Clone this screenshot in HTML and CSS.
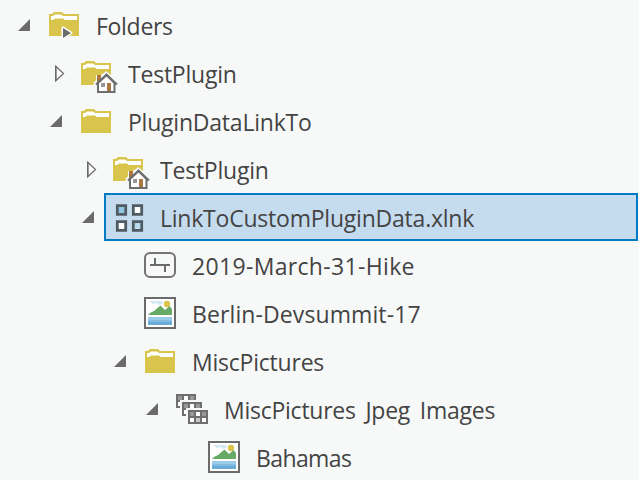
FILE: index.html
```
<!DOCTYPE html>
<html lang="en">
<head>
<meta charset="utf-8">
<title>Catalog</title>
<link rel="stylesheet" href="styles.css">
</head>
<body>
<svg class="defs" aria-hidden="true">
  <defs>
    <symbol id="open" viewBox="0 0 12 12"><path d="M12 0V12H0Z" fill="#6b6b6b"/></symbol>
    <symbol id="closed" viewBox="0 0 10 17"><path d="M.8 1.2V15.8L8.5 8.5Z" fill="#fff" stroke="#737373" stroke-width="1.3"/><path d="M.7 1V16" stroke="#6b6b6b" stroke-width="1.4"/></symbol>
    <symbol id="folder" viewBox="0 0 32 32">
      <path d="M1 6H4L6 4H14L16 6H31V28H1Z" fill="#d9c54c"/>
      <path d="M3 8H5L7 6.500H13L15 8H29V12H17L15 10.500H7L5 12H3Z" fill="#fff"/>
    </symbol>
    <symbol id="house" viewBox="0 0 40 40">
      <path d="M13.500 29V26L16 23V18H21L26.500 14L39 26V29H37V37.500H15V29Z" fill="#f7f9f9"/>
      <path d="M17 18H21V23L17 26Z" fill="#a9783f"/>
      <path d="M18 26L26.500 18L34.500 26V35H18Z" fill="#fff" stroke="#6d6e70" stroke-width="2"/>
      <path d="M16 27.500L26.500 17.800L37 27.500" fill="none" stroke="#6d6e70" stroke-width="2.200"/>
      <path d="M21 26H25V30H21Z" fill="#969696"/><path d="M27 26H31V34H27Z" fill="#a9783f"/>
    </symbol>
    <symbol id="picture" viewBox="0 0 32 32">
      <path d="M1 1H31V31H1Z" fill="#fff" stroke="#6b6b6b" stroke-width="2"/>
      <path d="M5 4H19L18 7L15 8L12 6L9 7Z" fill="#d3e8f5"/>
      <circle cx="23" cy="7" r="3.200" fill="#dac54c"/>
      <path d="M4 18L6 16L10 14L16.500 8.500L21 13L25.500 9L28 12V18Z" fill="#67aa65"/>
      <path d="M4 20H28V28H4Z" fill="#69acd9"/><path d="M4 20H28V23H4Z" fill="#9acbea"/><path d="M4 23H28V25H4Z" fill="#82bce2"/>
    </symbol>
    <linearGradient id="blue" x2="1" y2="1"><stop stop-color="#86c1df"/><stop offset="1" stop-color="#c3e3f2"/></linearGradient>
    <filter id="soft"><feGaussianBlur stdDeviation=".6"/></filter>
    <g id="sheet">
      <path d="M0 0H20V14H0Z" fill="#6f6f6f"/>
      <path d="M2 2H6V6H2ZM8 2H12V6H8ZM14 2H18V6H14ZM2 8H6V12H2ZM8 8H12V12H8ZM14 8H18V12H14Z" fill="#fff"/>
      <path d="M2 2H6V6H2ZM14 2H18V6H14Z" fill="#999"/><path d="M8 8H12V12H8Z" fill="#c8c8c8"/>
    </g>
  </defs>
</svg>
<main class="tree">
  <div class="row"><svg class="arrow"><use href="#open"/></svg><div class="item"><svg class="icon"><use href="#folder" y="-1" width="32" height="32"/><path d="M15 19L23 24L15 29Z" fill="#6b6b6b" stroke="#fff" stroke-width="3" stroke-linejoin="round" paint-order="stroke"/></svg><span class="label folders">Folders</span></div></div>
  <div class="row d1"><svg class="arrow closed"><use href="#closed"/></svg><div class="item"><svg class="icon"><use href="#folder" width="32" height="32"/><use href="#house" width="40" height="40"/></svg><span class="label">TestPlugin</span></div></div>
  <div class="row d1"><svg class="arrow"><use href="#open"/></svg><div class="item"><svg class="icon"><use href="#folder" width="32" height="32"/></svg><span class="label">PluginDataLinkTo</span></div></div>
  <div class="row d2"><svg class="arrow closed"><use href="#closed"/></svg><div class="item"><svg class="icon"><use href="#folder" width="32" height="32"/><use href="#house" width="40" height="40"/></svg><span class="label">TestPlugin</span></div></div>
  <div class="row d2"><svg class="arrow"><use href="#open"/></svg><div class="item selected"><svg class="icon"><g stroke="#505b63" stroke-width="2.800" filter="url(#soft)"><path d="M5.300 4.700H13.700V13.300H5.300ZM21.300 20.700H29.700V29.300H21.300Z" fill="url(#blue)"/><path d="M21.300 4.700H29.700V13.300H21.300ZM5.300 20.700H13.700V29.300H5.300Z" fill="#fff"/></g></svg><span class="label">LinkToCustomPluginData.xlnk</span></div></div>
  <div class="row d3"><span class="arrow"></span><div class="item"><svg class="icon"><rect x="1" y="4" width="30" height="24" rx="5" fill="none" stroke="#737373" stroke-width="2"/><path d="M6 16H26M11 9V16M21 16V23" fill="none" stroke="#6b6b6b" stroke-width="2"/></svg><span class="label hike">2019-March-31-Hike</span></div></div>
  <div class="row d3"><span class="arrow"></span><div class="item"><svg class="icon"><use href="#picture" width="32" height="32"/></svg><span class="label berlin">Berlin-Devsummit-17</span></div></div>
  <div class="row d3"><svg class="arrow"><use href="#open"/></svg><div class="item"><svg class="icon"><use href="#folder" width="32" height="32"/></svg><span class="label">MiscPictures</span></div></div>
  <div class="row d4"><svg class="arrow"><use href="#open"/></svg><div class="item"><svg class="icon"><use href="#sheet" y="1"/><path d="M4 7H24V25H4Z" fill="#f7f9f9"/><use href="#sheet" x="6" y="9"/><path d="M10 15H30V31H10Z" fill="#f7f9f9"/><use href="#sheet" x="12" y="17"/></svg><span class="label jpeg">MiscPictures Jpeg Images</span></div></div>
  <div class="row d5"><span class="arrow"></span><div class="item"><svg class="icon"><use href="#picture" width="32" height="32"/></svg><span class="label bahamas">Bahamas</span></div></div>
</main>
</body>
</html>
```
FILE: styles.css
```
* { box-sizing: border-box; }
body { margin: 0; height: 480px; overflow: hidden; background: #f7f9f9; color: #444; font: 23px/32px "Open Sans", "Noto Sans", sans-serif; }
.defs { display: block; width: 0; height: 0; }
.tree { padding: 1px 1px 0 18px; }
.row { display: flex; height: 48px; }
.arrow { width: 12px; height: 12px; margin: 18px 10px 0 0; flex: none; }
.arrow.closed { width: 10px; height: 17px; margin: 16px 7px 0 5px; }
.item { display: flex; flex: 1; padding: 6px; border: 2px solid transparent; }
.selected { background: #c5dbee; border-color: #007ac2; }
.icon { width: 32px; height: 32px; flex: none; overflow: visible; }
.label { margin-left: 16px; padding-top: 1px; white-space: nowrap; letter-spacing: -.22px; }
.folders { letter-spacing: -.3px; }
.hike { letter-spacing: .33px; }
.berlin { letter-spacing: .1px; }
.jpeg { letter-spacing: -.25px; word-spacing: 4px; }
.bahamas { letter-spacing: -.6px; }
.d1 { padding-left: 32px; }
.d2 { padding-left: 64px; }
.d3 { padding-left: 96px; }
.d4 { padding-left: 128px; }
.d5 { padding-left: 160px; }
```
